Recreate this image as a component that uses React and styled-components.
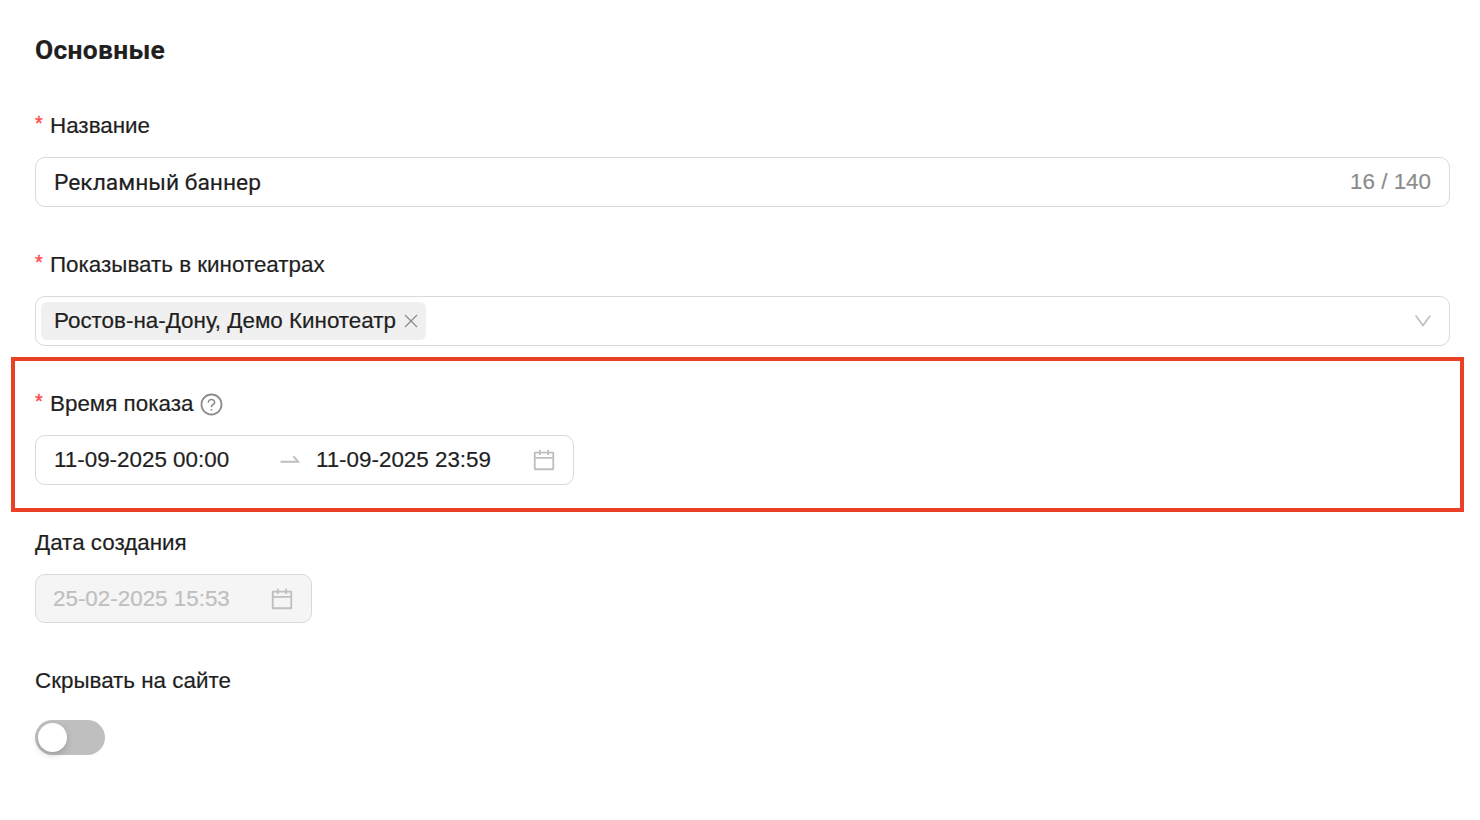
import styled, { createGlobalStyle } from 'styled-components';
import {
  AiOutlineCalendar,
  AiOutlineDown,
  AiOutlineQuestionCircle,
} from 'react-icons/ai';

const SwapIcon = () => (
  <svg className="swap" width="20" height="10" viewBox="0 0 20 10">
    <path d="M0.5 6.7H18L13.4 1.2" fill="none" stroke="currentColor" strokeWidth="1.9" />
  </svg>
);

const CloseIcon = () => (
  <svg width="14" height="14" viewBox="0 0 14 14">
    <path d="M1 1L13 13M13 1L1 13" fill="none" stroke="currentColor" strokeWidth="1.3" />
  </svg>
);

const App = () => {
  return (
    <>
      <GlobalStyle />
      <Form>
        <Title>Основные</Title>

        <Field>
          <Label>
            <Required>*</Required>
            <LabelText>Название</LabelText>
          </Label>
          <Control className="name">
            <span className="value">Рекламный баннер</span>
            <span className="count">16 / 140</span>
          </Control>
        </Field>

        <Field>
          <Label>
            <Required>*</Required>
            <LabelText>Показывать в кинотеатрах</LabelText>
          </Label>
          <Control className="select">
            <Tag>
              <span>Ростов-на-Дону, Демо Кинотеатр</span>
              <CloseIcon />
            </Tag>
            <AiOutlineDown className="arrow" size={22} />
          </Control>
        </Field>

        <Highlight>
          <Label>
            <Required>*</Required>
            <LabelText>Время показа</LabelText>
            <AiOutlineQuestionCircle className="help" size={25} />
          </Label>
          <Control className="range">
            <span className="date">11-09-2025 00:00</span>
            <SwapIcon />
            <span className="date">11-09-2025 23:59</span>
            <AiOutlineCalendar className="calendar" size={26} />
          </Control>
        </Highlight>

        <Field>
          <Label>
            <LabelText>Дата создания</LabelText>
          </Label>
          <Control className="disabled">
            <span className="date">25-02-2025 15:53</span>
            <AiOutlineCalendar className="calendar" size={26} />
          </Control>
        </Field>

        <Field>
          <Label>
            <LabelText>Скрывать на сайте</LabelText>
          </Label>
          <Switch type="button" role="switch" aria-checked="false">
            <span />
          </Switch>
        </Field>
      </Form>
    </>
  );
};

const GlobalStyle = createGlobalStyle`
  * {
    box-sizing: border-box;
  }

  body {
    margin: 0;
    background: #fff;
    color: #1f1f1f;
    font-family: "Liberation Sans", Arial, sans-serif;
    font-size: 22.4px;
    -webkit-text-stroke: 0.2px;
  }
`;

const Form = styled.div`
  display: flex;
  flex-direction: column;
  padding: 34px 30px 0 35px;
`;

const Title = styled.h2`
  margin: 0 0 46px;
  font-family: Roboto, sans-serif;
  font-size: 26.4px;
  font-weight: 700;
  letter-spacing: 0.3px;
  line-height: 32px;
`;

const Field = styled.div`
  margin-bottom: 44px;
`;

const Highlight = styled.div`
  margin: -33px -14px 17px -24px;
  padding: 29px 10px 23px 20px;
  border: 4px solid #ea4025;
`;

const Label = styled.div`
  display: flex;
  align-items: center;
  height: 26px;
  margin-bottom: 19px;

  .help {
    margin: 2px 0 0 5.5px;
    color: #8c8c8c;
  }
`;

const LabelText = styled.span`
  line-height: 26px;
  padding-top: 2px;
  white-space: nowrap;
`;

const Required = styled.span`
  width: 15px;
  padding-bottom: 5px;
  color: #ff4d4f;
  font-size: 20px;
  line-height: 26px;
  -webkit-text-stroke: 0.4px #ff4d4f;
`;

const Control = styled.div`
  display: flex;
  align-items: center;
  height: 50px;
  border: 1px solid #d9d9d9;
  border-radius: 10px;
  padding: 0 18px;
  white-space: nowrap;

  .count {
    margin-left: auto;
    color: #8c8c8c;
  }

  .arrow,
  .swap,
  .calendar {
    flex: none;
    color: #bfbfbf;
  }

  &.name .value {
    font-family: Roboto, sans-serif;
    font-size: 22.8px;
    letter-spacing: 0;
  }

  &.select {
    padding: 0 15px 0 5px;

    .arrow {
      margin-left: auto;
    }
  }

  &.range {
    width: 539px;
    padding: 0 16px 0 18px;

    .swap {
      margin: 0 16px 0 auto;
    }

    .calendar {
      margin-left: 40px;
    }
  }

  &.disabled {
    width: 277px;
    height: 49px;
    padding: 0 16px 0 17px;
    background: #f5f5f5;
    color: #bfbfbf;

    .calendar {
      margin-left: auto;
    }
  }
`;

const Tag = styled.div`
  display: flex;
  align-items: center;
  height: 38px;
  padding: 0 8px 0 13px;
  border-radius: 6px;
  background: #f0f0f0;

  svg {
    margin-left: 8px;
    color: #8c8c8c;
  }
`;

const Switch = styled.button`
  display: flex;
  align-items: center;
  width: 70px;
  height: 35px;
  margin-top: 27px;
  padding: 0 3px;
  border: 0;
  border-radius: 18px;
  background: #bfbfbf;

  span {
    width: 29px;
    height: 29px;
    border-radius: 50%;
    background: #fff;
    box-shadow: 0 3px 6px rgba(0, 35, 11, 0.2);
  }
`;

export default App;
